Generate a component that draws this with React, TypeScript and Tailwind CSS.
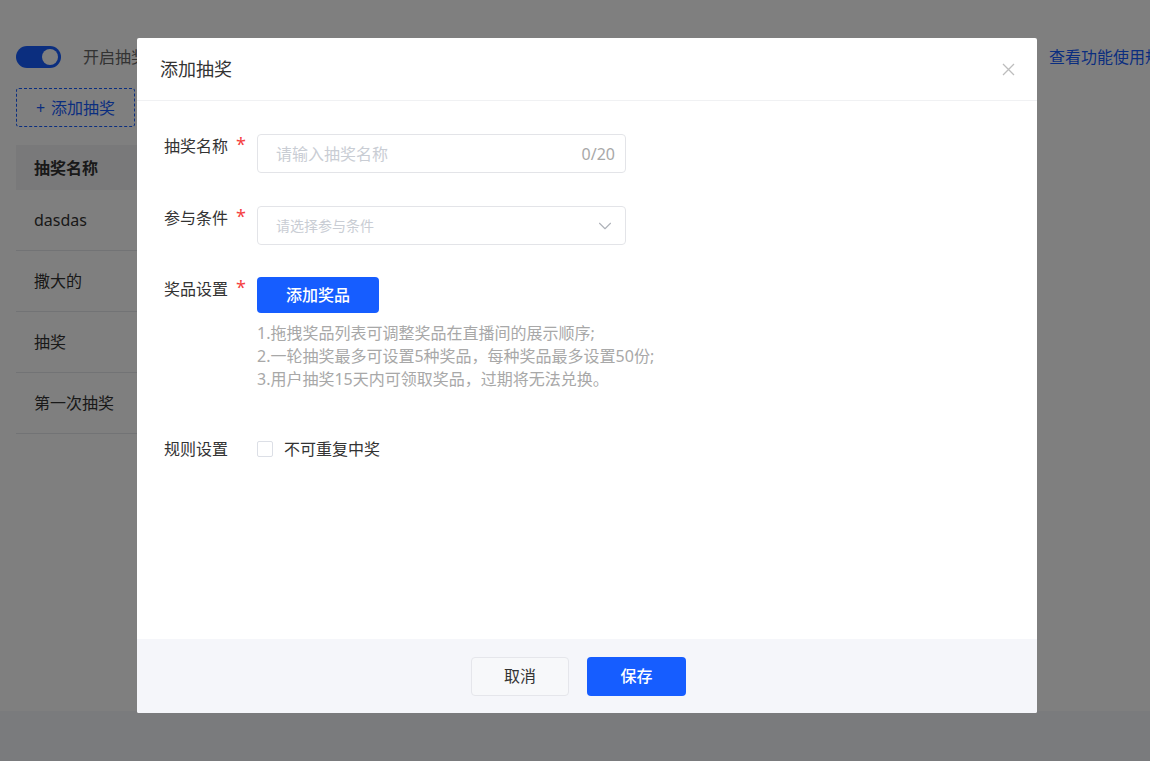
import { ChevronDown } from "lucide-react";

const lotteryRows = ["dasdas", "撒大的", "抽奖", "第一次抽奖"];

const hints = [
  "1.拖拽奖品列表可调整奖品在直播间的展示顺序;",
  "2.一轮抽奖最多可设置5种奖品，每种奖品最多设置50份;",
  "3.用户抽奖15天内可领取奖品，过期将无法兑换。",
];

const fontStack = {
  fontFamily: '"Noto Sans", "Noto Sans CJK SC", sans-serif',
};

function Required() {
  return <span className="ml-2 text-[18px] leading-[18px] text-[#f53f3f]">*</span>;
}

function FieldLabel({ text, required }: { text: string; required?: boolean }) {
  return (
    <div className="flex w-[93px] shrink-0 items-start pt-[1px] text-[16px] leading-[22px] text-[#333]">
      <span>{text}</span>
      {required && <Required />}
    </div>
  );
}

function LotteryPage() {
  return (
    <div className="h-[711px] bg-white">
      <div className="flex items-center justify-between pt-[45px] pl-4">
        <div className="flex items-center gap-[22px]">
          <div className="flex h-[22px] w-[45px] items-center justify-end rounded-full bg-[#165dff] px-[3px]">
            <div className="h-4 w-4 rounded-full bg-white" />
          </div>
          <span className="text-[16px] text-[#666]">开启抽奖</span>
        </div>
        <a className="mr-[-27px] text-[16px] text-[#165dff]">查看功能使用规则</a>
      </div>

      <button className="mt-[19px] ml-4 flex h-[39px] w-[119px] items-center justify-center gap-1.5 rounded-[3px] border border-dashed border-[#165dff] text-[16px] text-[#165dff]">
        <span>+</span>
        <span>添加抽奖</span>
      </button>

      <div className="mt-[18px] ml-4 w-[980px]">
        <div className="flex h-[45px] items-center bg-[#f2f3f5] px-[18px] text-[16px] font-bold text-[#333]">
          抽奖名称
        </div>
        {lotteryRows.map((row) => (
          <div
            key={row}
            className="flex h-[61px] items-center border-b border-[#e5e6eb] px-[18px] text-[16px] text-[#333]"
          >
            {row}
          </div>
        ))}
      </div>
    </div>
  );
}

function AddLotteryModal() {
  return (
    <div className="absolute top-[38px] left-[137px] flex h-[675px] w-[900px] flex-col overflow-hidden rounded-[2px] bg-white">
      <div className="flex h-[63px] shrink-0 items-center justify-between border-b border-[#f0f1f3] pr-[22px] pl-[23px]">
        <span className="text-[18px] text-[#333]">添加抽奖</span>
        <svg width="13" height="13" viewBox="0 0 13 13" fill="none">
          <path d="M1 1L12 12M12 1L1 12" stroke="#bdbdbd" strokeWidth="1.3" />
        </svg>
      </div>

      <div className="flex-1 pt-[33px] pl-[27px]">
        <div className="flex">
          <FieldLabel text="抽奖名称" required />
          <div className="flex h-[39px] w-[369px] items-center justify-between rounded-[4px] border border-[#e3e4e8] pr-[10px] pl-[18px] text-[16px]">
            <span className="text-[#c9cdd4]">请输入抽奖名称</span>
            <span className="text-[#a8a8a8]">0/20</span>
          </div>
        </div>

        <div className="mt-[33px] flex">
          <FieldLabel text="参与条件" required />
          <div className="flex h-[39px] w-[369px] items-center justify-between rounded-[4px] border border-[#e3e4e8] pr-[9px] pl-[18px] text-[14px]">
            <span className="text-[#c9cdd4]">请选择参与条件</span>
            <ChevronDown size={22} strokeWidth={1.2} className="text-[#aeb2b9]" />
          </div>
        </div>

        <div className="mt-[32px] flex">
          <FieldLabel text="奖品设置" required />
          <div>
            <button className="flex h-[36px] w-[122px] items-center justify-center rounded-[4px] bg-[#165dff] text-[16px] font-medium text-white">
              添加奖品
            </button>
            <div className="mt-[9px] text-[16px] leading-[23px] text-[#a8a8a8]">
              {hints.map((line) => (
                <div key={line}>{line}</div>
              ))}
            </div>
          </div>
        </div>

        <div className="mt-[46px] flex items-center">
          <div className="w-[93px] shrink-0 text-[16px] leading-[24px] text-[#333]">规则设置</div>
          <label className="flex items-center gap-[11px] text-[16px] text-[#333]">
            <span className="h-4 w-4 rounded-[2px] border border-[#dcdfe6] bg-white" />
            <span>不可重复中奖</span>
          </label>
        </div>
      </div>

      <div className="flex h-[74px] shrink-0 items-center justify-center gap-[18px] bg-[#f5f6fa] pr-[17px]">
        <button className="h-[39px] w-[98px] rounded-[4px] border border-[#e5e6eb] bg-[#f7f8fa] text-[16px] text-[#333]">
          取消
        </button>
        <button className="h-[39px] w-[99px] rounded-[4px] bg-[#165dff] text-[16px] font-medium text-white">
          保存
        </button>
      </div>
    </div>
  );
}

export default function App() {
  return (
    <div className="relative h-[761px] w-full overflow-hidden bg-[#f5f6fa]" style={fontStack}>
      <LotteryPage />
      <div className="absolute inset-0 bg-black/50" />
      <AddLotteryModal />
    </div>
  );
}
